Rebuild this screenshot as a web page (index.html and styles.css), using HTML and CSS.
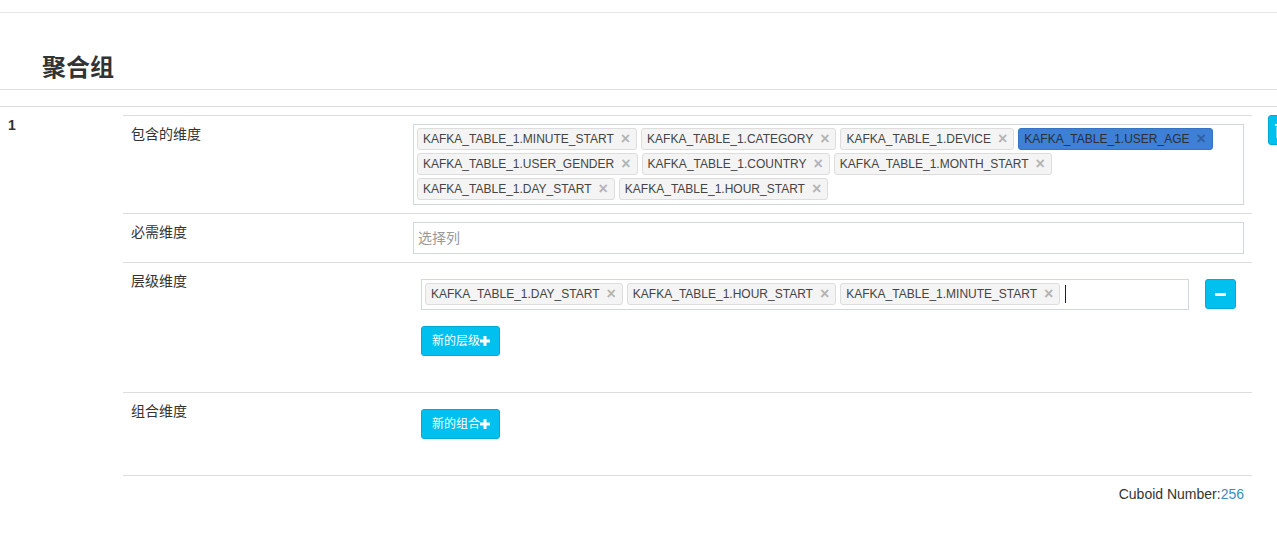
FILE: index.html
```html
<!DOCTYPE html>
<html lang="zh">
<head>
<meta charset="utf-8">
<title>聚合组</title>
<link rel="stylesheet" href="styles.css">
</head>
<body>
<div class="page">
  <div class="header"><h3 class="title">聚合组</h3></div>
  <div class="groups">
    <div class="group-row">
      <div class="group-index">1</div>
      <div class="group-body">
        <div class="dim-table">
          <div class="dim-row">
            <div class="dim-label">包含的维度</div>
            <div class="dim-value">
              <div class="tag-box">
                <span class="tag">KAFKA_TABLE_1.MINUTE_START<span class="x">×</span></span>
                <span class="tag">KAFKA_TABLE_1.CATEGORY<span class="x">×</span></span>
                <span class="tag">KAFKA_TABLE_1.DEVICE<span class="x">×</span></span>
                <span class="tag tag-active">KAFKA_TABLE_1.USER_AGE<span class="x">×</span></span>
                <span class="tag">KAFKA_TABLE_1.USER_GENDER<span class="x">×</span></span>
                <span class="tag">KAFKA_TABLE_1.COUNTRY<span class="x">×</span></span>
                <span class="tag">KAFKA_TABLE_1.MONTH_START<span class="x">×</span></span>
                <span class="tag">KAFKA_TABLE_1.DAY_START<span class="x">×</span></span>
                <span class="tag">KAFKA_TABLE_1.HOUR_START<span class="x">×</span></span>
              </div>
            </div>
          </div>
          <div class="dim-row">
            <div class="dim-label">必需维度</div>
            <div class="dim-value">
              <div class="select-input">选择列</div>
            </div>
          </div>
          <div class="dim-row">
            <div class="dim-label">层级维度</div>
            <div class="dim-value">
              <div class="hier-row">
                <div class="hier-box-cell">
                  <div class="tag-box tag-box-single">
                    <span class="tag">KAFKA_TABLE_1.DAY_START<span class="x">×</span></span>
                    <span class="tag">KAFKA_TABLE_1.HOUR_START<span class="x">×</span></span>
                    <span class="tag">KAFKA_TABLE_1.MINUTE_START<span class="x">×</span></span>
                    <span class="caret-line"></span>
                  </div>
                </div>
                <div class="hier-btn-cell">
                  <button class="btn-info btn-icon" type="button">
                    <svg width="11" height="3" viewBox="0 0 11 3"><rect x="0" y="0" width="11" height="3" fill="#fff"/></svg>
                  </button>
                </div>
              </div>
              <div class="add-cell">
                <button class="btn-info btn-add" type="button">新的层级<svg class="plus" width="10" height="10" viewBox="0 0 10 10"><path d="M3.5 0h3v3.5H10v3H6.5V10h-3V6.5H0v-3h3.5z" fill="#fff"/></svg></button>
              </div>
            </div>
          </div>
          <div class="dim-row">
            <div class="dim-label">组合维度</div>
            <div class="dim-value">
              <div class="add-cell">
                <button class="btn-info btn-add" type="button">新的组合<svg class="plus" width="10" height="10" viewBox="0 0 10 10"><path d="M3.5 0h3v3.5H10v3H6.5V10h-3V6.5H0v-3h3.5z" fill="#fff"/></svg></button>
              </div>
            </div>
          </div>
          <div class="dim-row cuboid-row">
            <div class="cuboid">Cuboid Number:<span class="num">256</span></div>
          </div>
        </div>
      </div>
      <div class="group-action">
        <button class="btn-info btn-icon btn-edge" type="button">
          <svg width="12" height="14" viewBox="0 0 12 14"><rect x="0" y="0" width="12" height="2" fill="#fff"/><rect x="1.5" y="3" width="9" height="11" fill="#fff"/></svg>
        </button>
      </div>
    </div>
  </div>
</div>
</body>
</html>
```

FILE: styles.css
```css
html, body {
  margin: 0;
  padding: 0;
  background: #fff;
}
body {
  font-family: "Liberation Sans", "Noto Sans CJK SC", Arial, sans-serif;
  font-size: 14px;
  line-height: 20px;
  color: #333;
  overflow: hidden;
}
.page {
  margin-top: 12px;
  border-top: 1px solid #e6e6e6;
  overflow: hidden;
}
.header {
  padding: 42px 0 8px 42px;
  border-bottom: 1px solid #e0e0e0;
}
.title {
  margin: 0;
  font-size: 24px;
  line-height: 26px;
  font-weight: 700;
  color: #333;
}
.groups {
  margin-top: 16px;
  border-top: 1px solid #ddd;
  overflow: hidden;
}
.group-row {
  display: flex;
  width: 1320px;
}
.group-index {
  flex: 0 0 115px;
  box-sizing: border-box;
  padding: 8px;
  font-weight: 700;
}
.group-body {
  flex: 0 0 1145px;
  box-sizing: border-box;
  padding: 8px;
}
.group-action {
  flex: 0 0 auto;
  padding: 8px;
}
.dim-row {
  display: flex;
  border-top: 1px solid #ddd;
}
.dim-label {
  flex: 0 0 282px;
  box-sizing: border-box;
  padding: 8px;
}
.dim-value {
  flex: 1 1 auto;
  min-width: 0;
  padding: 8px;
}
.tag-box {
  display: flex;
  flex-wrap: wrap;
  align-items: center;
  gap: 3px 4px;
  border: 1px solid #d2d6de;
  padding: 3px 3px 4px 3px;
  background: #fff;
}
.tag {
  display: inline-flex;
  align-items: center;
  box-sizing: border-box;
  height: 22px;
  padding: 0 6px 0 5px;
  border: 1px solid #ddd;
  border-radius: 3px;
  background: #f4f4f4;
  color: #444;
  font-size: 12px;
  line-height: 18px;
  white-space: nowrap;
}
.tag .x {
  margin-left: 7px;
  font-size: 16px;
  font-weight: 700;
  color: #b4b4b4;
  line-height: 18px;
}
.tag-active {
  background: #3e80d5;
  border-color: #3673c4;
  color: #2b2f36;
}
.tag-active .x {
  color: #2f5f9f;
}
.caret-line {
  display: inline-block;
  width: 1px;
  height: 18px;
  margin-left: 1px;
  background: #222;
}
.select-input {
  box-sizing: border-box;
  height: 32px;
  border: 1px solid #d2d6de;
  padding: 5px 4px;
  color: #999;
  line-height: 20px;
}
.hier-row {
  display: flex;
  align-items: flex-start;
}
.hier-box-cell {
  flex: 1 1 auto;
  min-width: 0;
  padding: 8px;
}
.hier-btn-cell {
  flex: 0 0 auto;
  padding: 8px;
}
.add-cell {
  padding: 8px 8px 28px 8px;
}
.btn-info {
  background: #00c0ef;
  border: 1px solid #00acd6;
  border-radius: 3px;
  color: #fff;
  font-family: inherit;
  cursor: pointer;
}
.btn-icon {
  display: flex;
  align-items: center;
  justify-content: center;
  box-sizing: border-box;
  width: 31px;
  height: 30px;
  padding: 0;
}
.btn-edge {
  justify-content: flex-start;
  padding-left: 6px;
  align-items: flex-start;
  padding-top: 8px;
}
.btn-add {
  display: inline-flex;
  align-items: center;
  box-sizing: border-box;
  height: 30px;
  padding: 5px 9px 5px 10px;
  font-size: 12px;
  line-height: 18px;
}
.cuboid-row {
  justify-content: flex-end;
}
.cuboid {
  padding: 8px;
}
.cuboid .num {
  color: #3c8dbc;
}
```
